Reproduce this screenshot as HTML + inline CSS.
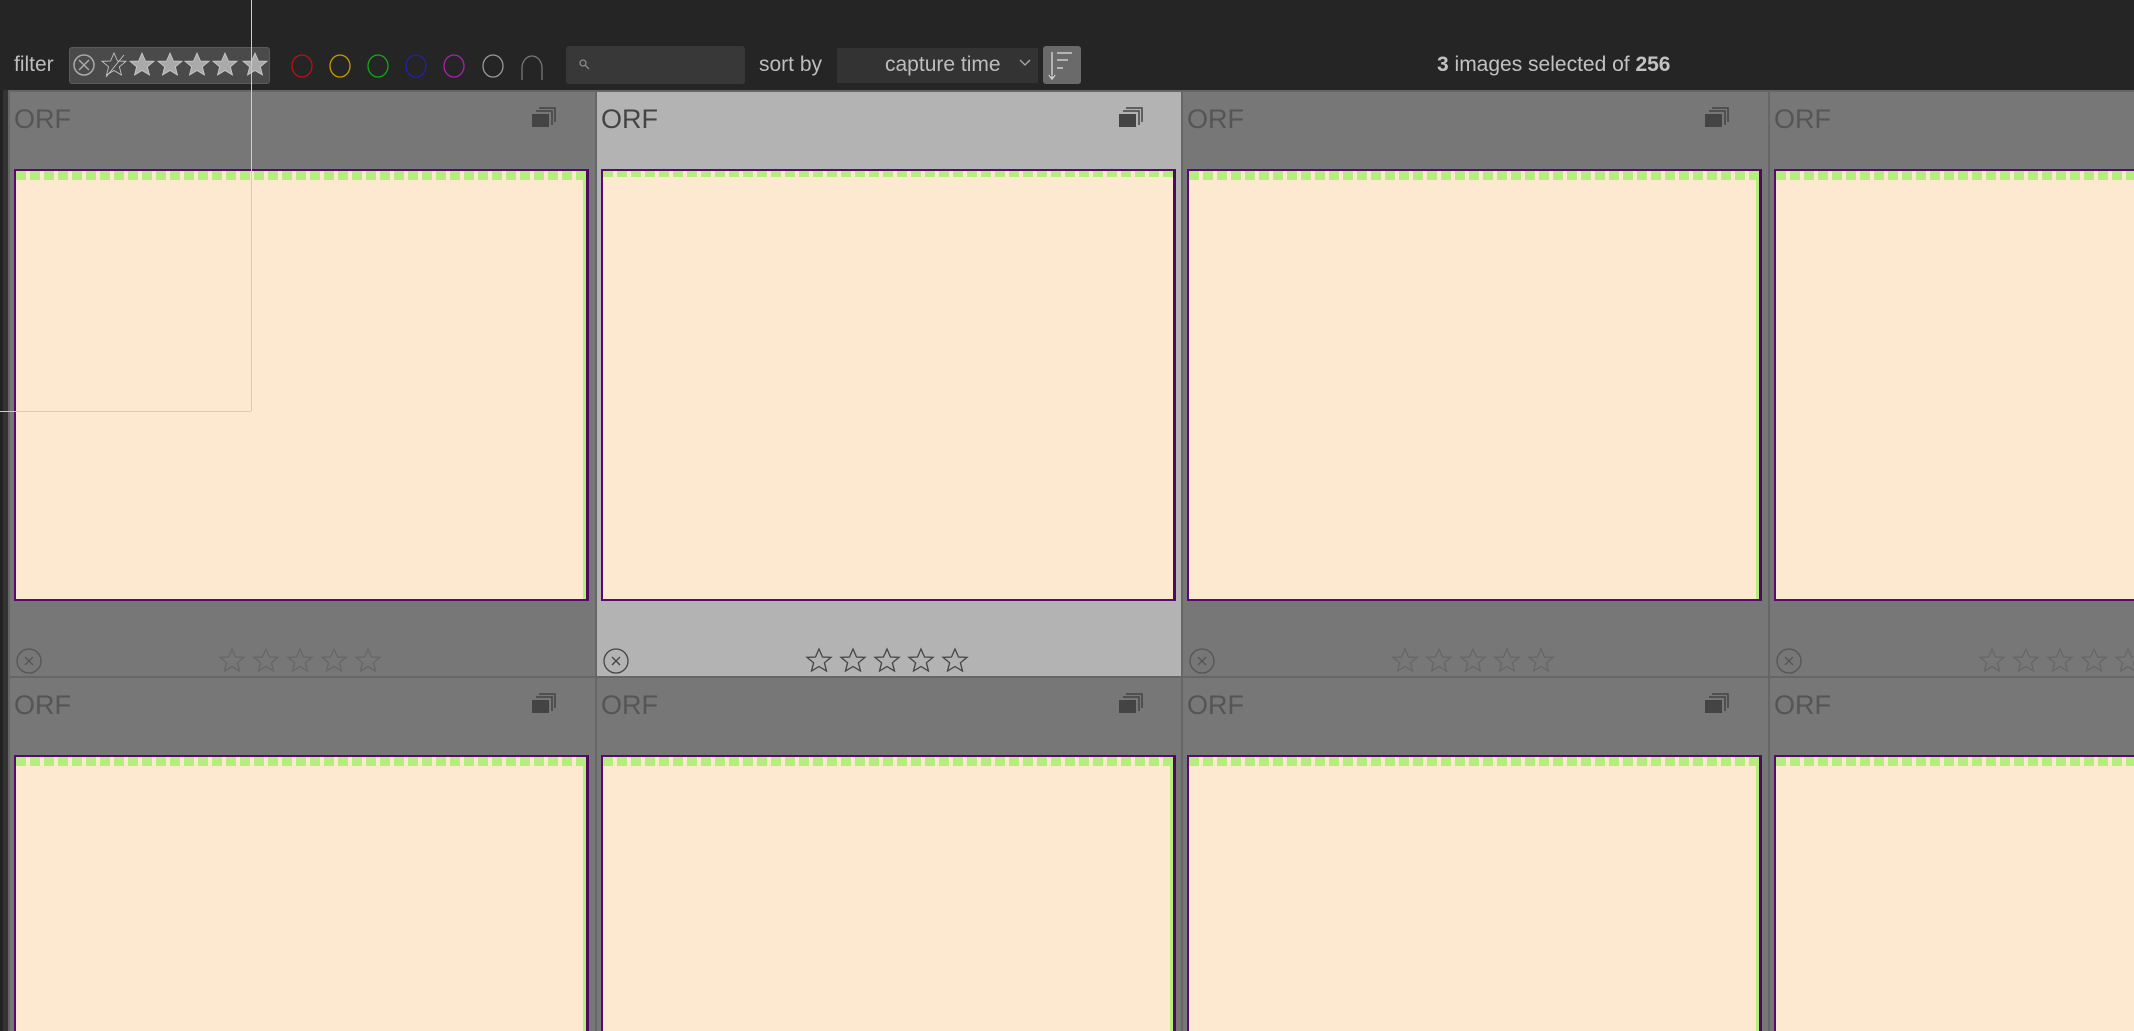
<!DOCTYPE html>
<html style="width:2134px;height:1031px;overflow:hidden"><head><meta charset="utf-8"><style>
*{margin:0;padding:0;box-sizing:border-box}
body{width:2134px;height:1031px;background:#777;overflow:hidden;position:relative;font-family:"Liberation Sans",sans-serif}
#wrap{position:absolute;left:0;top:0;width:2134px;height:1031px;overflow:hidden}
.top{position:absolute;left:0;top:0;width:2134px;height:90px;background:#252525}
.t{position:absolute;color:#bdbdbd;font-size:21px}
.cell{position:absolute;width:587px;height:587px;background:#777;border-left:2px solid #666;border-top:2px solid #666;overflow:hidden}
.cell.sel{background:#b3b3b3}
.orf{position:absolute;left:4px;top:12px;font-size:27px;color:#555}
.img{position:absolute;left:4px;top:77px;width:575px;height:432px;background:#fce9d0;border:2px solid #5a0a6e;border-right:3px solid #4b0a5c;overflow:hidden}
.strip{position:absolute;left:0;top:0;right:0;height:9px;background:repeating-linear-gradient(90deg,#b4ef7c 0 10px,#fce9d0 10px 14px)}
.gr{position:absolute;right:0;top:0;bottom:0;width:3px;background:#b4ef7c}
.stack{position:absolute;right:38px;top:14px}
.rej{position:absolute;left:6px;top:555px}
.stars{position:absolute;left:208px;top:555px}
</style></head><body><div id="wrap">
<div class="top"></div>
<div class="t" style="left:14px;top:53px">filter</div>
<div style="position:absolute;left:69px;top:47px;width:201px;height:37px;background:#4a4a4a;border:1px solid #5a5a5a;border-radius:3px"></div>
<svg style="position:absolute;left:69px;top:47px" width="201" height="37" viewBox="0 0 201 37">
<circle cx="15" cy="18" r="10" fill="none" stroke="#aaa" stroke-width="1.5"/><path d="M10 13l10 10M20 13l-10 10" stroke="#aaa" stroke-width="1.5"/>
<g fill="#aaa" stroke="#ccc" stroke-width="0.8">
<path transform="translate(45,18)" d="M0-12L3.5-4 12-3.7 5.4 1.8 7.5 10 0 5.5-7.5 10-5.4 1.8-12-3.7-3.5-4Z" fill="none"/>
<path d="M37 30L55 8" stroke="#ccc"/>
<path transform="translate(73,18)" d="M0-12L3.5-4 12-3.7 5.4 1.8 7.5 10 0 5.5-7.5 10-5.4 1.8-12-3.7-3.5-4Z"/>
<path transform="translate(101,18)" d="M0-12L3.5-4 12-3.7 5.4 1.8 7.5 10 0 5.5-7.5 10-5.4 1.8-12-3.7-3.5-4Z"/>
<path transform="translate(128,18)" d="M0-12L3.5-4 12-3.7 5.4 1.8 7.5 10 0 5.5-7.5 10-5.4 1.8-12-3.7-3.5-4Z"/>
<path transform="translate(156,18)" d="M0-12L3.5-4 12-3.7 5.4 1.8 7.5 10 0 5.5-7.5 10-5.4 1.8-12-3.7-3.5-4Z"/>
<path transform="translate(186,18)" d="M0-12L3.5-4 12-3.7 5.4 1.8 7.5 10 0 5.5-7.5 10-5.4 1.8-12-3.7-3.5-4Z"/>
</g></svg>
<svg style="position:absolute;left:290px;top:50px" width="260" height="34">
<g fill="none" stroke-width="1.3">
<ellipse cx="12" cy="16" rx="10" ry="11" stroke="#b11"/>
<ellipse cx="50" cy="16" rx="10" ry="11" stroke="#c90"/>
<ellipse cx="88" cy="16" rx="10" ry="11" stroke="#1a1"/>
<ellipse cx="126" cy="16" rx="10" ry="11" stroke="#22a"/>
<ellipse cx="164" cy="16" rx="10" ry="11" stroke="#a2a"/>
<ellipse cx="203" cy="16" rx="10" ry="11" stroke="#999"/>
<path d="M232 30V18a10 12 0 0 1 20 0V30" stroke="#777"/>
</g></svg>
<div style="position:absolute;left:566px;top:46px;width:179px;height:38px;background:#383838;border-radius:3px"></div>
<svg style="position:absolute;left:578px;top:58px" width="14" height="14"><circle cx="5" cy="5" r="3" fill="none" stroke="#888" stroke-width="1.3"/><path d="M7 7l4 4" stroke="#888" stroke-width="1.3"/></svg>
<div class="t" style="left:759px;top:53px">sort by</div>
<div style="position:absolute;left:837px;top:48px;width:201px;height:35px;background:#333"></div>
<div class="t" style="left:885px;top:53px">capture time</div>
<svg style="position:absolute;left:1018px;top:58px" width="14" height="10"><path d="M2 2l5 5 5-5" fill="none" stroke="#aaa" stroke-width="1.3"/></svg>
<div style="position:absolute;left:1043px;top:46px;width:38px;height:38px;background:#6a6a6a;border-radius:3px"></div>
<svg style="position:absolute;left:1043px;top:46px" width="38" height="38"><g stroke="#ccc" stroke-width="1.5"><path d="M9 6v27M6 29l3 4 3-4M14 7h15M14 14h11M14 22h6"/></g></svg>
<div class="t" style="left:1437px;top:53px;font-size:21px;color:#c2c2c2"><b>3</b> images selected of <b>256</b></div>
<div style="position:absolute;left:0;top:90px;width:3px;height:941px;background:#222"></div>
<div style="position:absolute;left:3px;top:90px;width:6px;height:941px;background:#333"></div>
<div id="g"></div>
<div style="position:absolute;left:251px;top:0;width:1px;height:411px;background:#ccc"></div>
<div style="position:absolute;left:0;top:411px;width:251px;height:1px;background:#ccc"></div>
</div>
<script>
var xs=[8,595,1181,1768],ys=[90,676],h='';
var star='<path d="M0-12L3.5-4 12-3.7 5.4 1.8 7.5 10 0 5.5-7.5 10-5.4 1.8-12-3.7-3.5-4Z" fill="none" stroke="SC" stroke-width="1.3"/>';
for(var r=0;r<2;r++)for(var c=0;c<4;c++){var sel=(r==0&&c==1);var sc=sel?'#444':'#666';var rc=sel?'#444':'#555';
var st='';for(var i=0;i<5;i++)st+='<g transform="translate('+(14+i*34)+',14)">'+star.replace('SC',sc)+'</g>';
h+='<div class="cell'+(sel?' sel':'')+'" style="left:'+xs[c]+'px;top:'+ys[r]+'px;'+(r==1?'height:355px':'')+'"><div class="orf"'+(sel?' style="color:#444"':'')+'>ORF</div>'+
'<svg class="stack" width="26" height="22"><path d="M8 2h16v14M5 5h16v14" fill="none" stroke="#444" stroke-width="1.5"/><rect x="1" y="8" width="17" height="13" fill="#444"/></svg>'+
'<div class="img" style="'+(r==1?'height:278px;border-bottom:none':'')+'"><div class="strip" style="'+(sel?'height:6px':'')+'"></div><div class="gr"'+(sel?' style="display:none"':'')+'></div></div>';
if(r==0)h+='<svg class="rej" width="28" height="28"><circle cx="13" cy="14" r="12" fill="none" stroke="'+rc+'" stroke-width="1.3"/><path d="M9 10l8 8M17 10l-8 8" stroke="'+rc+'" stroke-width="1.3"/></svg><svg class="stars" width="170" height="30">'+st+'</svg>';
h+='</div>';}
document.getElementById('g').innerHTML=h;
</script>
</body></html>
